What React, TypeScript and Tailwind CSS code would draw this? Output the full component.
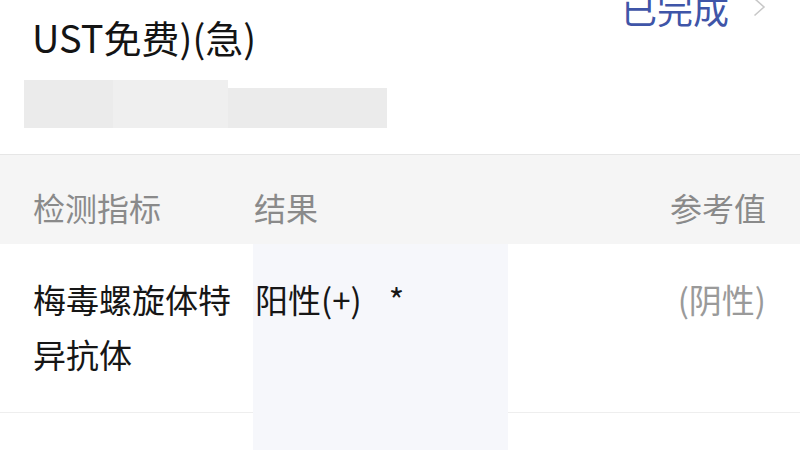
import React from "react";

export default function App() {
  const font = { fontFamily: '"Noto Sans CJK SC", "Noto Sans", sans-serif' };
  return (
    <div
      className="w-[800px] h-[450px] overflow-hidden bg-white flex flex-col"
      style={font}
    >
      {/* top section */}
      <div className="flex flex-col border-b border-[#e6e6e6] h-[155px] shrink-0">
        <div className="flex justify-end items-center h-[34px] -mt-[9px] pr-[34px] gap-[24px]">
          <span className="text-[36px] leading-[34px] text-[#3f55a8]">已完成</span>
          <svg width="13" height="20" viewBox="0 0 13 20" className="mt-[-2px]">
            <polyline
              points="1.5,1.5 11,10 1.5,18.5"
              fill="none"
              stroke="#c8c8c8"
              strokeWidth="1.6"
            />
          </svg>
        </div>
        <div className="pl-[32px] -mt-[8px] text-[38px] leading-[40px] text-[#141414]">
          UST免费)(急)
        </div>
        <div className="flex items-end ml-[24px] mt-[23px] h-[48px]">
          <div className="w-[89px] h-[48px] bg-[#ebebeb]" />
          <div className="w-[115px] h-[48px] bg-[#efefef]" />
          <div className="w-[159px] h-[40px] bg-[#ebebeb]" />
        </div>
      </div>

      {/* header */}
      <div className="flex h-[89px] bg-[#f5f5f5] shrink-0 pt-[32px] text-[32px] leading-[40px] text-[#8a8a8a]">
        <div className="w-[253px] pl-[33px]">检测指标</div>
        <div className="w-[255px] pl-[1px]">结果</div>
        <div className="flex-1 text-right pr-[34px]">参考值</div>
      </div>

      {/* body row */}
      <div className="flex flex-1">
        <div className="w-[253px] flex flex-col">
          <div className="pl-[33px] pr-[8px] pt-[28px] pb-[30px] text-[33px] leading-[55px] text-[#161616] border-b border-[#eeeeee]">
            梅毒螺旋体特
            <br />
            异抗体
          </div>
        </div>
        <div className="w-[255px] bg-[#f6f7fb] pt-[28px] pl-[2px] text-[33px] leading-[55px] text-[#161616] flex">
          <span>阳性(+)</span>
          <span className="ml-[27px]">*</span>
        </div>
        <div className="flex-1 flex flex-col">
          <div className="h-[169px] pt-[28px] pr-[34px] text-right text-[33px] leading-[55px] text-[#9a9a9a] border-b border-[#eeeeee]">
            (阴性)
          </div>
        </div>
      </div>
    </div>
  );
}
